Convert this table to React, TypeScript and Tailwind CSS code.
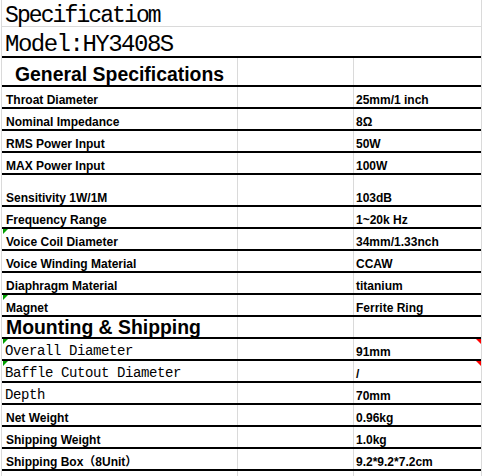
import React from "react";

type SpecRow = {
  label: string;
  value: string;
  mono?: boolean;
  tall?: boolean;
  note?: boolean; // green marker, top-left
  comment?: boolean; // red marker, top-right
};

const general: SpecRow[] = [
  { label: "Throat Diameter", value: "25mm/1 inch" },
  { label: "Nominal Impedance", value: "8Ω" },
  { label: "RMS Power Input", value: "50W" },
  { label: "MAX Power Input", value: "100W" },
  { label: "Sensitivity 1W/1M", value: "103dB", tall: true },
  { label: "Frequency Range", value: "1~20k Hz" },
  { label: "Voice Coil Diameter", value: "34mm/1.33nch", note: true },
  { label: "Voice Winding Material", value: "CCAW" },
  { label: "Diaphragm Material", value: "titanium" },
  { label: "Magnet", value: "Ferrite Ring", note: true },
];

const mounting: SpecRow[] = [
  { label: "Overall Diameter", value: "91mm", mono: true, note: true, comment: true },
  { label: "Baffle Cutout Diameter", value: "/", mono: true, note: true, comment: true },
  { label: "Depth", value: "70mm", mono: true },
  { label: "Net Weight", value: "0.96kg" },
  { label: "Shipping Weight", value: "1.0kg" },
  { label: "Shipping Box（8Unit）", value: "9.2*9.2*7.2cm" },
];

const sans = "font-['Liberation_Sans','Noto_Sans_CJK_SC',sans-serif]";
const mono = "font-['Liberation_Mono',monospace]";

const Row: React.FC<{ row: SpecRow }> = ({ row }) => (
  <div
    className={`grid grid-cols-[236px_116px_127px] border-b-2 border-black ${
      row.tall ? "h-[32px]" : "h-[22px]"
    }`}
  >
    <div
      className={`relative flex items-end border-r border-[#dadada] whitespace-nowrap ${
        row.mono
          ? `${mono} text-[14px] leading-[16px] tracking-[-0.4px] pl-[3px]`
          : `${sans} text-[12px] leading-[14px] font-bold pl-[4px]`
      }`}
    >
      {row.note && (
        <span className="absolute top-0 left-[1px] w-0 h-0 border-t-[5px] border-r-[5px] border-t-[#00a000] border-r-transparent" />
      )}
      {row.label}
    </div>
    <div className="border-r border-[#dadada]" />
    <div
      className={`relative flex items-end pl-[2px] whitespace-nowrap ${sans} text-[12px] leading-[14px] font-bold`}
    >
      {row.comment && (
        <span className="absolute top-0 right-0 w-0 h-0 border-t-[5px] border-l-[5px] border-t-[#ff0000] border-l-transparent" />
      )}
      {row.value}
    </div>
  </div>
);

export default function App() {
  return (
    <div className="w-[485px] h-[476px] bg-white text-black">
      <div className="ml-[1px] w-[481px] h-full flex flex-col border-x border-[#dadada]">
        {/* title rows */}
        <div className="h-[27px] border-b border-[#dadada] pl-[3px] pt-[5px]">
          <div className={`${mono} text-[23px] leading-[23px] tracking-[-1.9px] whitespace-nowrap`}>
            Specificatiom
          </div>
        </div>
        <div className="h-[31px] border-b-2 border-black pl-[3px] pt-[6px]">
          <div className={`${mono} text-[24px] leading-[24px] tracking-[-1.5px] whitespace-nowrap`}>
            Model:HY3408S
          </div>
        </div>

        {/* General Specifications */}
        <div className="grid grid-cols-[236px_116px_127px] h-[29px] border-b-2 border-black">
          <div
            className={`flex items-end border-r border-[#dadada] pl-[13px] ${sans} text-[19.4px] leading-[22px] font-bold whitespace-nowrap`}
          >
            General Specifications
          </div>
          <div className="border-r border-[#dadada]" />
          <div />
        </div>
        {general.map((r) => (
          <Row key={r.label} row={r} />
        ))}

        {/* Mounting & Shipping */}
        <div className="grid grid-cols-[236px_116px_127px] h-[22px] border-b-2 border-black">
          <div
            className={`flex items-end border-r border-[#dadada] pl-[4px] ${sans} text-[19.4px] leading-[20px] font-bold whitespace-nowrap`}
          >
            Mounting &amp; Shipping
          </div>
          <div className="border-r border-[#dadada]" />
          <div />
        </div>
        {mounting.map((r) => (
          <Row key={r.label} row={r} />
        ))}

        <div className="grid grid-cols-[236px_116px_127px] flex-1">
          <div className="border-r border-[#dadada]" />
          <div className="border-r border-[#dadada]" />
          <div />
        </div>
      </div>
    </div>
  );
}
